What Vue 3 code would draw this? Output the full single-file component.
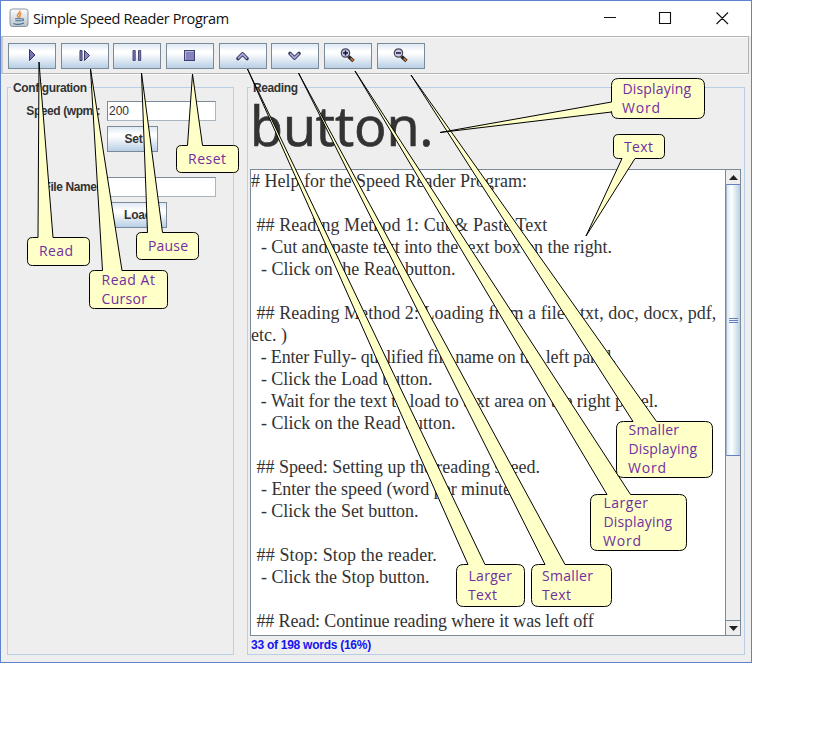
<script setup>
const tools = ['play', 'step', 'pause', 'stop', 'up', 'down', 'zoomin', 'zoomout']

// text, extra tracking in px for the whole line
const lines = [
  ['# Help for the Speed Reader Program:', 0],
  ['', 0],
  [' ## Reading Method 1: Cut & Paste Text', 2],
  ['  - Cut and paste text into the text box on the right.', -3],
  ['  - Click on the Read button.', -0.5],
  ['', 0],
  [' ## Reading Method 2: Loading from a file ( txt, doc, docx, pdf,', 3],
  ['etc. )', 0],
  ['  - Enter Fully- qualified file name on the left panel.', -9],
  ['  - Click the Load button.', -1],
  ['  - Wait for the text to load to text area on the right panel.', -4],
  ['  - Click on the Read button.', -0.5],
  ['', 0],
  [' ## Speed: Setting up the reading speed.', -1],
  ['  - Enter the speed (word per minute)', -1],
  ['  - Click the Set button.', -1],
  ['', 0],
  [' ## Stop: Stop the reader.', 3],
  ['  - Click the Stop button.', 0],
  ['', 0],
  [' ## Read: Continue reading where it was left off', -5.5]
]
const tracking = ([s, extra]) => ({ letterSpacing: (s ? extra / s.length : 0).toFixed(3) + 'px' })

// box: left, top, right, bottom; side: edge the tail leaves from; a-b: tail base
const callouts = [
  { box: [27.5, 237.5, 89.5, 265.5], side: 't', a: 38, b: 53, tip: [39, 62], text: [['Read', 39, 256, 34]] },
  { box: [89.5, 270.5, 167.5, 308.5], side: 't', a: 102.5, b: 122, tip: [90.5, 69], text: [['Read At', 101.5, 285, 53.5], ['Cursor', 101.5, 304, 45.5]] },
  { box: [136.5, 232.5, 198.5, 259.5], side: 't', a: 147.5, b: 162.5, tip: [141.5, 73], text: [['Pause', 148, 251, 40]] },
  { box: [176.5, 145.5, 238.5, 172.5], side: 't', a: 187.5, b: 202.5, tip: [192.5, 74], text: [['Reset', 188, 164, 38]] },
  { box: [456.5, 564.5, 524.5, 606.5], side: 't', a: 468, b: 485, tip: [247.5, 69], text: [['Larger', 468.5, 581, 43.5], ['Text', 468, 600, 29]] },
  { box: [531.5, 564.5, 611.5, 606.5], side: 't', a: 545, b: 565, tip: [298.5, 73], text: [['Smaller', 542, 581, 51], ['Text', 542, 600, 29]] },
  { box: [590.5, 494.5, 686.5, 550.5], side: 't', a: 607, b: 630.5, tip: [355, 71], text: [['Larger', 603.5, 508, 44.5], ['Displaying', 603.5, 527, 68.5], ['Word', 603, 546, 38]] },
  { box: [616.5, 421.5, 712.5, 477.5], side: 't', a: 633, b: 656.5, tip: [411, 75], text: [['Smaller', 628.5, 435, 50.5], ['Displaying', 628.5, 454, 68.5], ['Word', 628, 473, 38]] },
  { box: [611.5, 78.5, 704.5, 118.5], side: 'l', a: 102, b: 112, tip: [440, 132.5], text: [['Displaying', 622.5, 94, 68.5], ['Word', 622, 113, 38]] },
  { box: [613.5, 134.5, 664.5, 158.5], side: 'b', a: 622, b: 635, tip: [586, 236], text: [['Text', 624, 152, 29]] }
]

function outline({ box: [l, t, r, b], side, a, b: e, tip }) {
  const k = b - t > 39 ? 7 : 5
  const top = side === 't' ? `L${a} ${t}L${tip}L${e} ${t}` : ''
  const bottom = side === 'b' ? `L${e} ${b}L${tip}L${a} ${b}` : ''
  const left = side === 'l' ? `L${l} ${e}L${tip}L${l} ${a}` : ''
  return `M${l + k} ${t}${top}H${r - k}Q${r} ${t} ${r} ${t + k}V${b - k}Q${r} ${b} ${r - k} ${b}` +
    `${bottom}H${l + k}Q${l} ${b} ${l} ${b - k}${left}V${t + k}Q${l} ${t} ${l + k} ${t}Z`
}
</script>

<template>
  <div class="stage">
    <div class="window">
      <header class="titlebar">
        <svg class="java" width="20" height="20" viewBox="0 0 20 20">
          <defs>
            <linearGradient id="jg" x1="0" y1="0" x2="0" y2="1">
              <stop offset="0" stop-color="#fdfdfd" /><stop offset="1" stop-color="#b9c3cc" />
            </linearGradient>
          </defs>
          <rect x="1" y="1" width="18" height="17.5" rx="2.5" fill="url(#jg)" stroke="#8795a1" />
          <path d="M10.8 2.6C11.8 5 7.6 5.8 8.500 8q.5 1 1.200 1.800M12.300 5.200C9.800 6.500 11.600 8 10.500 9.600" fill="none" stroke="#e8862e" stroke-width="1.500" />
          <path d="M6 10.800h7M6.400 12.800h6.200M4.500 15.400q5 2 10.500-.3M13 10.800q3 .2.2 2.200" fill="none" stroke="#3f6d8f" stroke-width="1.100" />
        </svg>
        <span class="title">Simple Speed Reader Program</span>
        <svg class="controls" width="130" height="20" viewBox="0 0 130 20" fill="none" stroke="#111" stroke-width="1.1">
          <path d="M4 9.5h12M59.500 4.500h11v11h-11zM116.500 4.500l11.500 11.500M128 4.500l-11.500 11.500" />
        </svg>
      </header>

      <div class="toolbar">
        <button v-for="t in tools" :key="t" class="tool">
          <svg width="20" height="18" viewBox="0 0 20 18">
            <path v-if="t === 'play'" d="M7.500 2.500v11l5.500-5.500z" fill="#7474b8" stroke="#35355f" />
            <template v-else-if="t === 'step'">
              <path d="M5 3.500h2v10H5zM9.500 3.500v10l5-5z" fill="#8888c4" stroke="#35355f" />
            </template>
            <path v-else-if="t === 'pause'" d="M6 3.500h2.200v10H6zM11.500 3.500h2.200v10h-2.200z" fill="#7777b4" stroke="#484878" />
            <g v-else-if="t === 'stop'">
              <rect x="4.500" y="3.500" width="10" height="10" fill="#8383bd" stroke="#3f3f70" />
              <path d="M5.500 12.500v-8h8" fill="none" stroke="#b7b7dd" />
            </g>
            <g v-else-if="t === 'up'" fill="none" stroke-linejoin="round">
              <path d="M5 11.500l4.500-4.500 4.500 4.500" stroke="#333350" stroke-width="3.600" stroke-linecap="round" />
              <path d="M5 11.500l4.500-4.500 4.500 4.500" stroke="#a3a3dd" stroke-width="1.800" />
            </g>
            <g v-else-if="t === 'down'" fill="none" stroke-linejoin="round">
              <path d="M5 6.500l4.500 4.500 4.500-4.500" stroke="#333350" stroke-width="3.600" stroke-linecap="round" />
              <path d="M5 6.500l4.500 4.500 4.500-4.500" stroke="#a3a3dd" stroke-width="1.800" />
            </g>
            <g v-else>
              <path d="M10.500 9.500l5 4.500" stroke="#222" stroke-width="3.500" />
              <path d="M12.700 11.300l2.600 2.400" stroke="#c8692c" stroke-width="2" />
              <circle cx="7.500" cy="6" r="4.200" fill="#c9c9ee" stroke="#4a4a5a" stroke-width="1.200" />
              <path :d="t === 'zoomin' ? 'M5 6h5M7.500 3.500v5' : 'M5 6h5'" stroke="#161628" stroke-width="1.500" />
            </g>
          </svg>
        </button>
      </div>

      <main class="panels">
        <section class="panel config">
          <h2 class="legend">Configuration</h2>
          <div class="form">
            <label>Speed (wpm):</label>
            <div class="field">200</div>
            <button class="push set">Set</button>
            <label class="second">File Name:</label>
            <div class="field second"></div>
            <button class="push load">Load</button>
          </div>
        </section>

        <section class="panel reading">
          <h2 class="legend">Reading</h2>
          <div class="word">button.</div>
          <div class="scroller">
            <div class="text">
              <div v-for="(l, i) in lines" :key="i" class="line" :class="{ indented: l[0][0] === ' ' }" :style="tracking(l)">{{ l[0] }}</div>
            </div>
            <div class="scrollbar">
              <div class="arrow"><svg width="9" height="5"><path d="M0 5L4.500 0 9 5z" fill="#222" /></svg></div>
              <div class="thumb"><i></i><i></i><i></i></div>
              <div class="space"></div>
              <div class="arrow last"><svg width="9" height="5"><path d="M0 0h9L4.500 5z" fill="#222" /></svg></div>
            </div>
          </div>
          <div class="status">33 of 198 words (16%)</div>
        </section>
      </main>
    </div>

    <svg class="callouts" width="822" height="739" viewBox="0 0 822 739">
      <g v-for="(c, i) in callouts" :key="i">
        <path :d="outline(c)" class="bubble" />
        <text v-for="t in c.text" :key="t[0]" :x="t[1]" :y="t[2]" :textLength="t[3]">{{ t[0] }}</text>
      </g>
    </svg>
  </div>
</template>

<style>
body { background: #fff; }
</style>

<style scoped>
.stage { position: relative; width: 822px; height: 739px; overflow: hidden; font-family: "Liberation Sans", Arial, sans-serif; color: #333; }
.stage * { box-sizing: border-box; }
.window { width: 752px; height: 663px; border: 1px solid #5f83cc; background: #eee; display: flex; flex-direction: column; }
.titlebar { height: 35px; background: #fff; display: flex; align-items: center; padding: 0 21px 1px 8px; }
.title { font: 14.500px "Open Sans", "Noto Sans", sans-serif; color: #111; margin-left: 4px; letter-spacing: -0.37px; white-space: nowrap; }
.controls { margin-left: auto; }
.toolbar { height: 38px; margin-right: 2px; border: 1px solid #b4b4b4; border-left: 2px solid #c8c8c8; box-shadow: inset 0 1px #fafafa, 0 1px #fafafa; display: flex; align-items: center; gap: 4.700px; padding: 1px 0 0 5px; flex: none; }
.tool { width: 48px; height: 26px; padding: 0; border: 1px solid #7a8a99; background: linear-gradient(#dde8f3, #fff 30%, #fff 38%, #b8cfe5); display: flex; align-items: center; justify-content: center; flex: none; }
.panels { flex: 1; display: flex; gap: 13px; padding: 13px 6px 7px 6px; min-height: 0; }
.panel { border: 1px solid #b8cfe5; display: flex; flex-direction: column; }
.config { width: 227px; flex: none; }
.reading { flex: 1; min-width: 0; padding: 0 3px 0 2px; }
.legend { margin: -7px 0 0 3px; padding: 0 2px; font-size: 12px; line-height: 14px; height: 14px; font-weight: bold; background: #eee; align-self: flex-start; letter-spacing: -0.38px; flex: none; }
.reading .legend { margin-left: 1px; }
.form { display: grid; grid-template-columns: 92px 109px; column-gap: 7px; justify-items: start; font-size: 12px; font-weight: bold; padding-top: 6px; }
.form label { justify-self: end; line-height: 21px; white-space: nowrap; letter-spacing: -0.42px; }
.field { width: 109px; height: 20px; border: 1px solid #7a8a99; border-right-color: #a9b5c0; border-bottom-color: #a9b5c0; background: #fff; font-weight: normal; line-height: 19px; padding-left: 1px; }
.push { grid-column: 2; margin-top: 4px; height: 26px; border: 1px solid #7a8a99; background: linear-gradient(#dde8f3, #fff 30%, #fff 38%, #b8cfe5); font: bold 12px "Liberation Sans", Arial, sans-serif; letter-spacing: -0.2px; color: #333; padding: 0 0 0 2px; }
.set { width: 51px; }
.load { width: 60px; }
.second { margin-top: 25px; }
.word { height: 74px; flex: none; font: 54px/61px "Open Sans", "Noto Sans", sans-serif; color: #333; white-space: nowrap; -webkit-text-stroke: 0.7px #333; letter-spacing: -0.15px; }
.scroller { height: 467px; border: 1px solid #7a8a99; background: #fff; display: flex; flex: none; }
.text { flex: 1; overflow: hidden; min-width: 0; }
.line { height: 22px; line-height: 22px; font-family: "Liberation Serif", "Times New Roman", serif; font-size: 18px; white-space: pre; }
.indented { padding-left: 1px; }
.scrollbar { width: 15px; display: flex; flex-direction: column; border-left: 1px solid #7a8a99; background: #eee; }
.arrow { height: 14px; display: flex; align-items: center; justify-content: center; background: #eee; flex: none; }
.last { height: 15px; border-top: 1px solid #7a8a99; }
.thumb { height: 272px; border: 1px solid #6382bf; border-right: 0; border-left-color: #a3b8cc; background: linear-gradient(90deg, #dde8f3, #fff 35%, #b8cfe5); display: flex; flex-direction: column; align-items: center; justify-content: center; gap: 1px; flex: none; }
.thumb i { width: 9px; height: 1px; background: #6382bf; }
.space { flex: 1; }
.status { color: #1414f0; font-size: 12px; font-weight: bold; line-height: 19px; height: 18px; letter-spacing: -0.26px; white-space: nowrap; padding-left: 1px; flex: none; }
.callouts { position: absolute; left: 0; top: 0; }
.bubble { fill: #ffffc8; stroke: #000; stroke-width: 1; stroke-linejoin: bevel; }
.callouts text { font: 14px "Open Sans", "Noto Sans", sans-serif; fill: #7030a0; }
</style>
